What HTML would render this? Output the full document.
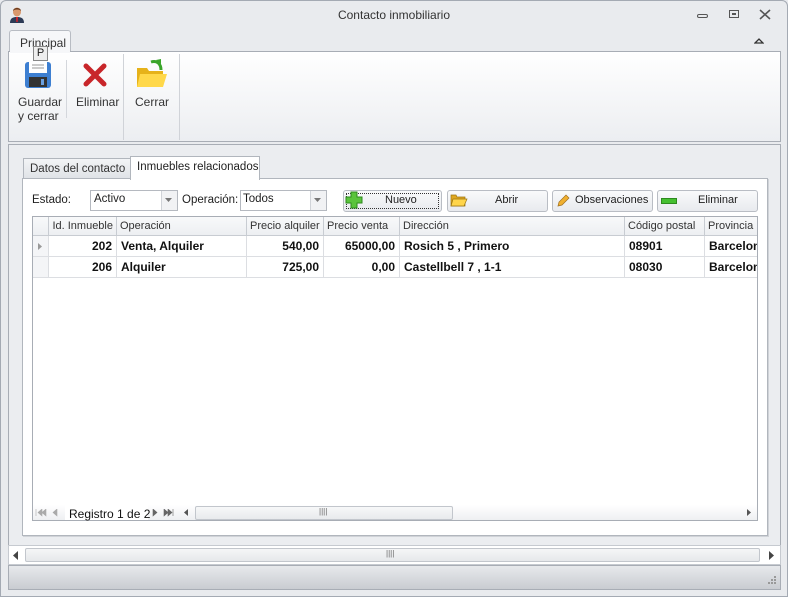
<!DOCTYPE html>
<html><head><meta charset="utf-8"><style>
*{box-sizing:border-box;margin:0;padding:0}
body{width:788px;height:597px;overflow:hidden;background:#e9ebef;font-family:"Liberation Sans",sans-serif;font-size:11px;color:#1e1e1e;position:relative}
.a{position:absolute}
.t{position:absolute;white-space:nowrap}
.btn{position:absolute;height:22px;border:1px solid #b9bdc4;border-radius:3px;background:linear-gradient(#f9fafb,#e8eaee);}
.cell{position:absolute;height:21px;line-height:20px;border-right:1px solid #dcdee2;border-bottom:1px solid #dcdee2;padding:0 4px;white-space:nowrap;overflow:hidden;font-weight:bold;font-size:12px;color:#111}
.hd{position:absolute;top:217px;height:19px;line-height:18px;border-right:1px solid #c8ccd2;border-bottom:1px solid #c8ccd2;padding:0 3px;background:linear-gradient(#f8f9fa,#edeff2);color:#333;white-space:nowrap;overflow:hidden}
.r{text-align:right}
</style></head><body>
<div class="a" style="left:0;top:0;width:788px;height:597px;border:1px solid #a4aab3;border-radius:6px 6px 0 0;background:#e9ebee"></div>
<svg class="a" style="left:8px;top:6px" width="18" height="18" viewBox="0 0 18 18"><ellipse cx="9" cy="6" rx="4" ry="4.5" fill="#d9986c"/><path d="M5 5c0-4 8-4 8 0c-1-2-7-2-8 0z" fill="#6b3a1e"/><path d="M2 17c0-5 3-6 7-6s7 1 7 6z" fill="#2c3a55"/><path d="M8 11h2l-.3 5h-1.4z" fill="#d0202a"/></svg>
<div class="t" style="left:0;width:788px;text-align:center;top:8px;color:#333;font-size:12px">Contacto inmobiliario</div>
<div class="a" style="left:697px;top:14px;width:11px;height:4px;border:1px solid #555;border-radius:2px"></div>
<div class="a" style="left:729px;top:10px;width:10px;height:8px;border:1px solid #555"></div><div class="a" style="left:732px;top:13px;width:4px;height:2px;background:#555"></div>
<svg class="a" style="left:759px;top:9px" width="12" height="11"><path d="M1 1l10 9M11 1L1 10" stroke="#555" stroke-width="1.6"/></svg>
<svg class="a" style="left:754px;top:37px" width="10" height="7"><path d="M1 6L5 2l4 4z" fill="none" stroke="#333" stroke-width="1.3"/></svg>
<div class="a" style="left:9px;top:30px;width:62px;height:22px;border:1px solid #b8bcc3;border-bottom:none;border-radius:3px 3px 0 0;background:#f6f7f9"></div>
<div class="t" style="left:20px;top:36px;color:#333;font-size:12px">Principal</div>
<div class="a" style="left:8px;top:51px;width:773px;height:91px;border:1px solid #a8adb5;background:linear-gradient(#fff,#eceef1)"></div>
<div class="a" style="left:10px;top:51px;width:60px;height:2px;background:#f6f7f9"></div>
<div class="a" style="left:33px;top:46px;width:15px;height:15px;border:1px solid #888;background:#eee;font-size:11px;line-height:13px;text-align:center">P</div>
<svg class="a" style="left:24px;top:60px" width="28" height="28" viewBox="0 0 28 28"><rect x="1" y="2" width="26" height="26" rx="3" fill="#3d7fd1"/><rect x="5" y="2" width="18" height="11" fill="#fff"/><path d="M8 5h12M8 8h12" stroke="#999"/><rect x="5" y="17" width="18" height="10" fill="#333"/><rect x="17" y="19" width="3" height="6" fill="#6aa0e0"/></svg>
<div class="t" style="left:18px;top:95px;line-height:14px;color:#333;font-size:12px">Guardar<br>y cerrar</div>
<div class="a" style="left:66px;top:60px;width:1px;height:58px;background:#d4d7dc"></div>
<svg class="a" style="left:82px;top:62px" width="26" height="26" viewBox="0 0 26 26"><path d="M4 4L22 22M22 4L4 22" stroke="#c8262a" stroke-width="5" stroke-linecap="round"/></svg>
<div class="t" style="left:76px;top:95px;color:#333;font-size:12px">Eliminar</div>
<div class="a" style="left:123px;top:54px;width:1px;height:86px;background:#d0d3d8"></div>
<svg class="a" style="left:135px;top:58px" width="34" height="32" viewBox="0 0 34 32"><path d="M2 10h10l2 3h14v16H2z" fill="#e6b21a"/><path d="M5 16h27l-4 13H2z" fill="#ffd84a"/><path d="M16 4c6-2 10 2 10 8" stroke="#3aa52a" stroke-width="3" fill="none"/><path d="M21 2l5-1 0 5z" fill="#3aa52a"/></svg>
<div class="t" style="left:135px;top:95px;color:#333;font-size:12px">Cerrar</div>
<div class="a" style="left:179px;top:54px;width:1px;height:86px;background:#d0d3d8"></div>
<div class="a" style="left:8px;top:141px;width:773px;height:4px;border-bottom:1px solid #a8adb5"></div>
<div class="a" style="left:8px;top:145px;width:773px;height:400px;background:#ebedf0;border-left:1px solid #a8adb5;border-right:1px solid #a8adb5"></div>
<div class="a" style="left:23px;top:158px;width:108px;height:22px;border:1px solid #b1b6bd;background:linear-gradient(#f3f4f6,#dfe2e6)"></div>
<div class="t" style="left:30px;top:163px;color:#333;font-size:11.5px">Datos del contacto</div>
<div class="a" style="left:22px;top:178px;width:746px;height:358px;border:1px solid #b1b6bd;background:#fff;box-shadow:1px 1px 0 #d0d3d8"></div>
<div class="a" style="left:130px;top:156px;width:130px;height:24px;border:1px solid #b1b6bd;border-bottom:none;background:#fff"></div>
<div class="t" style="left:137px;top:161px;color:#222;font-size:11.5px">Inmuebles relacionados</div>
<div class="t" style="left:32px;top:194px;font-size:11.5px">Estado:</div>
<div class="a" style="left:90px;top:190px;width:88px;height:21px;border:1px solid #b5b9c0;background:#fff"></div>
<div class="t" style="left:94px;top:193px;font-size:11.5px">Activo</div>
<div class="a" style="left:161px;top:191px;width:16px;height:19px;border-left:1px solid #d0d3d8;background:#f1f2f4"></div>
<svg class="a" style="left:165px;top:198px" width="8" height="5"><path d="M0 0h7L3.5 4z" fill="#777"/></svg>
<div class="t" style="left:182px;top:194px;font-size:11.5px">Operación:</div>
<div class="a" style="left:240px;top:190px;width:87px;height:21px;border:1px solid #b5b9c0;background:#fff"></div>
<div class="t" style="left:243px;top:193px;font-size:11.5px">Todos</div>
<div class="a" style="left:310px;top:191px;width:16px;height:19px;border-left:1px solid #d0d3d8;background:#f1f2f4"></div>
<svg class="a" style="left:314px;top:198px" width="8" height="5"><path d="M0 0h7L3.5 4z" fill="#777"/></svg>
<div class="btn" style="left:343px;top:190px;width:99px"></div>
<div class="a" style="left:346px;top:193px;width:93px;height:16px;border:1px dotted #333"></div>
<svg class="a" style="left:345px;top:191px" width="18" height="18"><path d="M6 1h6v5h5v6h-5v5H6v-5H1V6h5z" fill="#5ac43c" stroke="#2e8a1e"/></svg>
<div class="t" style="left:385px;top:194px">Nuevo</div>
<div class="btn" style="left:447px;top:190px;width:101px"></div>
<svg class="a" style="left:450px;top:193px" width="18" height="14"><path d="M1 2h5l1 2h8v9H1z" fill="#e0a820" stroke="#9a7410" stroke-width=".7"/><path d="M3 6h14l-3 7H1z" fill="#ffd54a" stroke="#9a7410" stroke-width=".7"/></svg>
<div class="t" style="left:495px;top:194px">Abrir</div>
<div class="btn" style="left:552px;top:190px;width:101px"></div>
<svg class="a" style="left:556px;top:194px" width="14" height="14"><path d="M2 12l1-4 7-7 3 3-7 7z" fill="#f0b030" stroke="#a07020" stroke-width=".7"/></svg>
<div class="t" style="left:575px;top:194px">Observaciones</div>
<div class="btn" style="left:657px;top:190px;width:101px"></div>
<div class="a" style="left:661px;top:198px;width:16px;height:6px;background:#45c030;border:1px solid #2e8a1e"></div>
<div class="t" style="left:698px;top:194px">Eliminar</div>
<div class="a" style="left:32px;top:216px;width:726px;height:305px;border:1px solid #a8adb5;background:#fff"></div>
<div class="hd" style="left:33px;width:16px"></div>
<div class="hd r" style="left:49px;width:68px">Id. Inmueble</div>
<div class="hd" style="left:117px;width:130px">Operación</div>
<div class="hd" style="left:247px;width:77px">Precio alquiler</div>
<div class="hd" style="left:324px;width:76px">Precio venta</div>
<div class="hd" style="left:400px;width:225px">Dirección</div>
<div class="hd" style="left:625px;width:80px">Código postal</div>
<div class="hd" style="left:705px;width:52px;border-right:none">Provincia</div>
<div class="cell" style="left:33px;top:236px;width:16px;background:#f4f5f7"></div>
<svg class="a" style="left:38px;top:243px" width="5" height="7"><path d="M0 0l4 3.5L0 7z" fill="#999"/></svg>
<div class="cell r" style="left:49px;top:236px;width:68px">202</div>
<div class="cell" style="left:117px;top:236px;width:130px">Venta, Alquiler</div>
<div class="cell r" style="left:247px;top:236px;width:77px">540,00</div>
<div class="cell r" style="left:324px;top:236px;width:76px">65000,00</div>
<div class="cell" style="left:400px;top:236px;width:225px">Rosich 5 , Primero</div>
<div class="cell" style="left:625px;top:236px;width:80px">08901</div>
<div class="cell" style="left:705px;top:236px;width:52px;border-right:none">Barcelona</div>
<div class="cell" style="left:33px;top:257px;width:16px;background:#f4f5f7"></div>
<div class="cell r" style="left:49px;top:257px;width:68px">206</div>
<div class="cell" style="left:117px;top:257px;width:130px">Alquiler</div>
<div class="cell r" style="left:247px;top:257px;width:77px">725,00</div>
<div class="cell r" style="left:324px;top:257px;width:76px">0,00</div>
<div class="cell" style="left:400px;top:257px;width:225px">Castellbell 7 , 1-1</div>
<div class="cell" style="left:625px;top:257px;width:80px">08030</div>
<div class="cell" style="left:705px;top:257px;width:52px;border-right:none">Barcelona</div>
<div class="a" style="left:33px;top:505px;width:724px;height:15px;background:linear-gradient(#fff,#eef0f2)"></div>
<svg class="a" style="left:35px;top:509px" width="30" height="8"><path d="M1 0v7M7 0L3 3.5 7 7zM11 0L7 3.5 11 7zM22 0l-4 3.5 4 3.5z" fill="#aaa" stroke="#aaa" stroke-width=".6"/></svg>
<div class="a" style="left:65px;top:505px;width:83px;height:15px;background:#fff"></div>
<div class="t" style="left:69px;top:507px;color:#111;font-size:12px">Registro 1 de 2</div>
<svg class="a" style="left:152px;top:509px" width="30" height="8"><path d="M1 0l4 3.5L1 7zM12 0l4 3.5L12 7zM16 0l4 3.5L16 7zM21 0v7" fill="#666" stroke="#666" stroke-width=".6"/></svg>
<svg class="a" style="left:183px;top:509px" width="6" height="8"><path d="M5 0L1 3.5 5 7z" fill="#555"/></svg>
<div class="a" style="left:195px;top:506px;width:258px;height:14px;border:1px solid #c2c6cc;border-radius:2px;background:linear-gradient(#f7f8f9,#e8eaed)"></div>
<div class="t" style="left:319px;top:507px;font-size:8px;color:#666">||||</div>
<svg class="a" style="left:746px;top:509px" width="6" height="8"><path d="M1 0l4 3.5L1 7z" fill="#555"/></svg>
<div class="a" style="left:8px;top:545px;width:773px;height:20px;background:#fff;border:1px solid #c6cad0"></div>
<svg class="a" style="left:13px;top:551px" width="6" height="9"><path d="M5 0L0 4.5 5 9z" fill="#444"/></svg>
<div class="a" style="left:25px;top:548px;width:735px;height:14px;border:1px solid #c2c6cc;border-radius:2px;background:linear-gradient(#f5f6f7,#e6e8eb)"></div>
<div class="t" style="left:386px;top:549px;font-size:8px;color:#666">||||</div>
<svg class="a" style="left:769px;top:551px" width="6" height="9"><path d="M0 0l5 4.5L0 9z" fill="#444"/></svg>
<div class="a" style="left:8px;top:565px;width:773px;height:25px;border:1px solid #a8adb5;background:linear-gradient(#e7e9ec,#c9ccd1)"></div>
<svg class="a" style="left:767px;top:575px" width="10" height="10"><g fill="#999"><rect x="7" y="1" width="2" height="2"/><rect x="4" y="4" width="2" height="2"/><rect x="7" y="4" width="2" height="2"/><rect x="1" y="7" width="2" height="2"/><rect x="4" y="7" width="2" height="2"/><rect x="7" y="7" width="2" height="2"/></g></svg>
</body></html>
